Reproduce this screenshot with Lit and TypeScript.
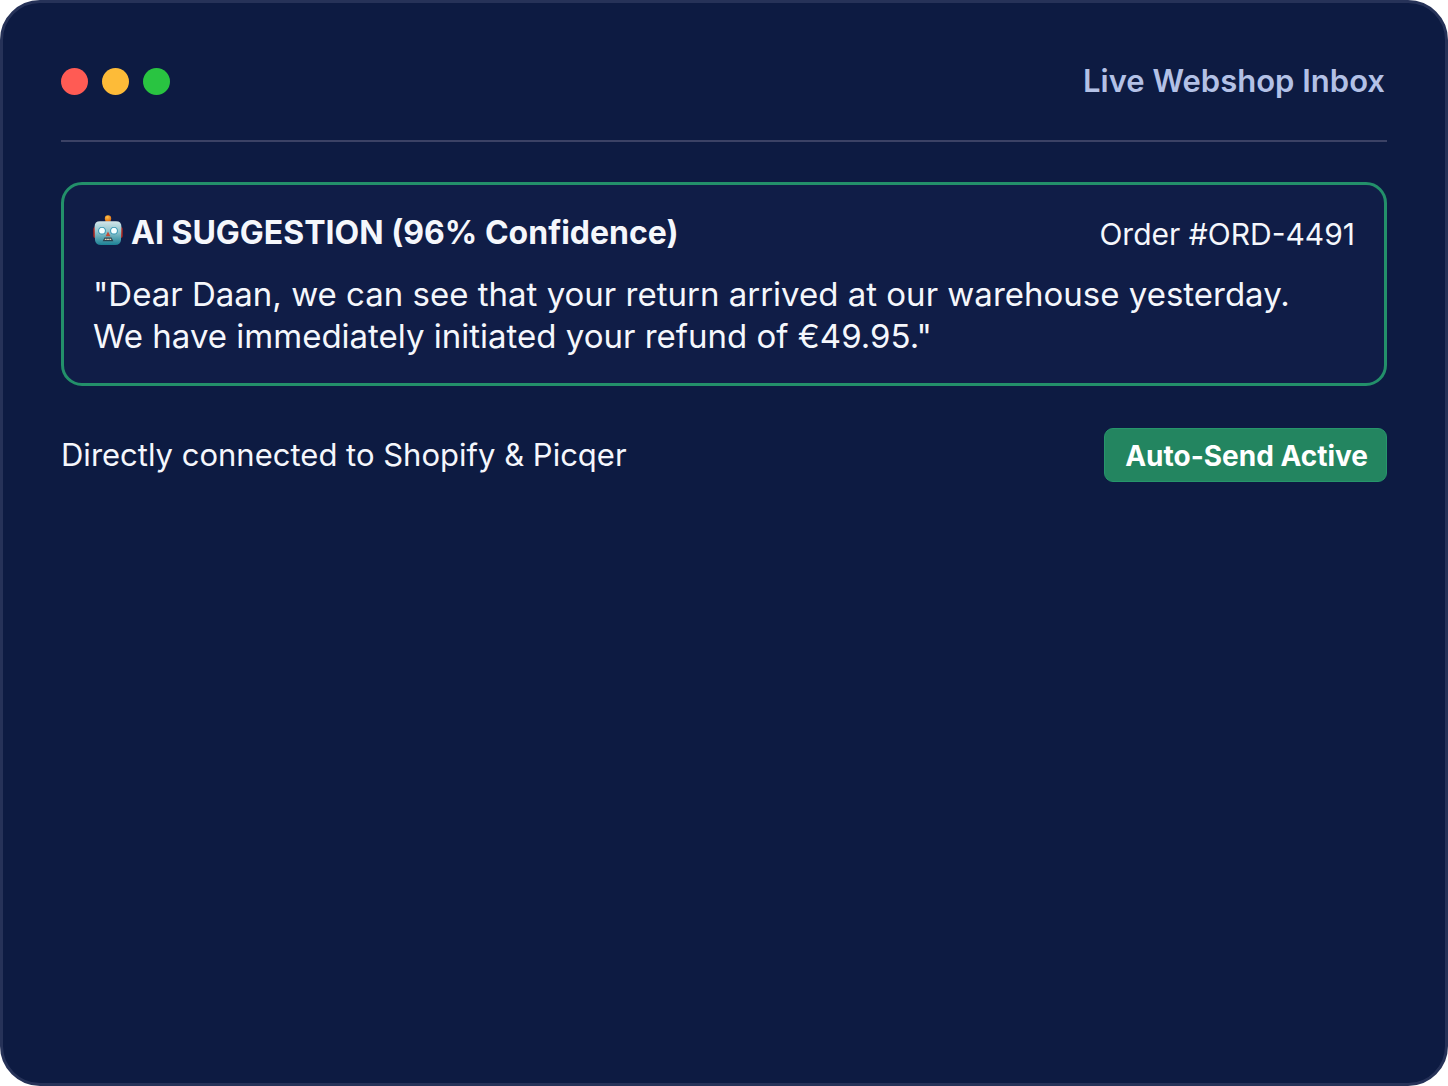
import { LitElement, html, css, svg } from "lit";
import { customElement, property } from "lit/decorators.js";

const robot = svg`
  <defs>
    <linearGradient id="face" x1="0" y1="0" x2="0" y2="1">
      <stop offset="0" stop-color="#d3e6ea" />
      <stop offset="0.45" stop-color="#8ec3cd" />
      <stop offset="1" stop-color="#1a8094" />
    </linearGradient>
    <radialGradient id="bulb" cx="0.4" cy="0.3" r="0.8">
      <stop offset="0" stop-color="#ffc247" />
      <stop offset="1" stop-color="#d9600c" />
    </radialGradient>
  </defs>
  <rect x="0.3" y="12" width="4" height="11" rx="2" fill="#b3281f" />
  <rect x="25.7" y="12" width="4" height="11" rx="2" fill="#b3281f" />
  <path d="M12 7.5 L13 5 H17 L18 7.5 Z" fill="#b5552a" />
  <circle cx="15" cy="3.4" r="3.2" fill="url(#bulb)" />
  <path d="M7 6.2 H23 Q28.4 6.200 28.400 11.500 L28 25 Q27.500 30 22 30 H8 Q2.500 30 2 25 L1.600 11.500 Q1.600 6.200 7 6.200 Z" fill="url(#face)" />
  <circle cx="9" cy="15.7" r="3.8" fill="#2f93b2" />
  <circle cx="21" cy="15.7" r="3.8" fill="#2f93b2" />
  <circle cx="9" cy="15.7" r="2.9" fill="#f4feff" />
  <circle cx="21" cy="15.7" r="2.9" fill="#f4feff" />
  <path d="M15 16.500 L17.400 21.300 H12.600 Z" fill="#c64a32" />
  <path d="M11.500 22.600 H18.500 L20.400 26.200 H9.600 Z" fill="#2d4450" />
  <path d="M11.800 24.400 H18.200" stroke="#e9d9bd" stroke-width="1.4" stroke-dasharray="1.800 0.500" />
`;

@customElement("suggestion-card")
export class SuggestionCard extends LitElement {
  @property({ type: Number }) confidence = 0;
  @property() order = "";
  @property({ attribute: false }) lines: string[] = [];

  static styles = css`
    :host {
      display: block;
    }
    .card {
      border: 3px solid #23906a;
      border-radius: 21px;
      background: #101d47;
      padding: 27px 29px 26px;
    }
    .head {
      display: flex;
      align-items: baseline;
      justify-content: space-between;
      gap: 24px;
    }
    .title {
      display: flex;
      align-items: center;
      gap: 8px;
      margin: 0;
      font-size: 32px;
      line-height: 42px;
      font-weight: 700;
    }
    .robot {
      width: 30px;
      height: 30px;
      flex: none;
      margin-bottom: 6px;
    }
    .order {
      font-size: 30px;
      line-height: 42px;
    }
    .message {
      margin: 18px 0 0;
      font-size: 33px;
      line-height: 42px;
    }
  `;

  render() {
    return html`
      <article class="card">
        <div class="head">
          <h2 class="title">
            <svg class="robot" viewBox="0 0 30 30" aria-hidden="true">${robot}</svg>
            <span>AI SUGGESTION (${this.confidence}% Confidence)</span>
          </h2>
          <span class="order">Order ${this.order}</span>
        </div>
        <p class="message">
          ${this.lines.map((line, i) => (i ? html`<br />${line}` : line))}
        </p>
      </article>
    `;
  }
}

@customElement("app-root")
export class AppRoot extends LitElement {
  static styles = css`
    :host {
      display: block;
      background: #ffffff;
      color: #f5f7fc;
      font-family: Inter, "Liberation Sans", sans-serif;
    }
    .window {
      box-sizing: border-box;
      min-height: 100vh;
      padding: 57px 58px;
      border: 3px solid #263258;
      border-radius: 40px;
      background: #0d1b42;
    }
    .bar {
      display: flex;
      align-items: center;
      justify-content: space-between;
      padding: 0 2px 38px 0;
      border-bottom: 2px solid #3b4265;
    }
    .dots {
      display: flex;
      gap: 14px;
    }
    .dot {
      width: 27px;
      height: 27px;
      border-radius: 50%;
    }
    .close {
      background: #ff5b54;
    }
    .minimise {
      background: #fdbb38;
    }
    .expand {
      background: #29c441;
    }
    .name {
      margin: 0;
      font-size: 31px;
      line-height: 42px;
      font-weight: 600;
      color: #b3c1e6;
    }
    .body {
      display: grid;
      gap: 42px;
      padding-top: 40px;
    }
    .foot {
      display: flex;
      align-items: center;
      justify-content: space-between;
      gap: 24px;
    }
    .note {
      margin: 0;
      font-size: 31px;
      line-height: 42px;
    }
    .send {
      border: 1px solid #26966b;
      border-radius: 9px;
      padding: 7px 18px 5px 20px;
      background: #238560;
      color: #ffffff;
      font-family: inherit;
      font-size: 28px;
      line-height: 40px;
      font-weight: 700;
    }
  `;

  private lines = [
    '"Dear Daan, we can see that your return arrived at our warehouse yesterday.',
    'We have immediately initiated your refund of €49.95."',
  ];

  render() {
    return html`
      <main class="window">
        <header class="bar">
          <div class="dots" aria-hidden="true">
            <span class="dot close"></span>
            <span class="dot minimise"></span>
            <span class="dot expand"></span>
          </div>
          <h1 class="name">Live Webshop Inbox</h1>
        </header>
        <div class="body">
          <suggestion-card
            confidence="96"
            order="#ORD-4491"
            .lines=${this.lines}
          ></suggestion-card>
          <div class="foot">
            <p class="note">Directly connected to Shopify &amp; Picqer</p>
            <button class="send" type="button">Auto-Send Active</button>
          </div>
        </div>
      </main>
    `;
  }
}
